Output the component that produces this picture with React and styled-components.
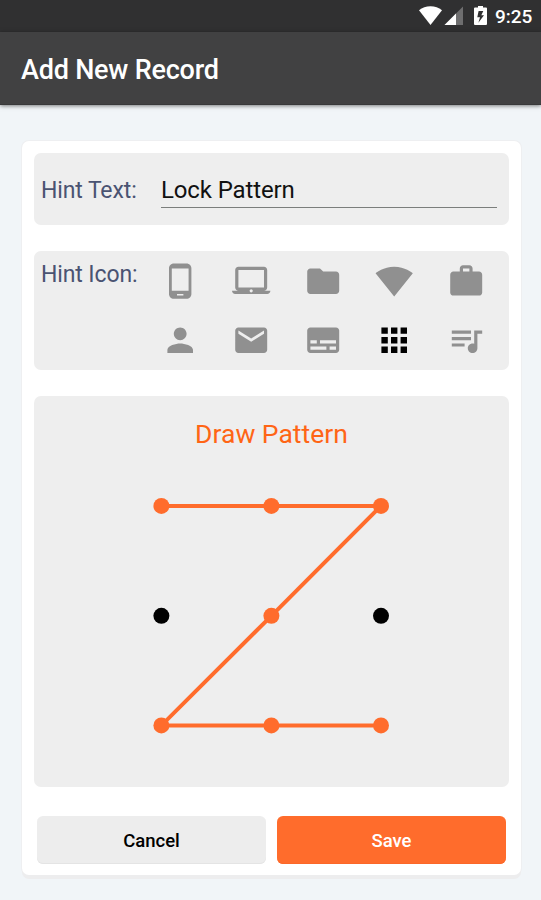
import React from "react";
import styled, { createGlobalStyle } from "styled-components";

const GlobalStyle = createGlobalStyle`
  *, *::before, *::after { box-sizing: border-box; }
  body {
    margin: 0;
    background: #f1f5f8;
    font-family: Roboto, sans-serif;
    overflow: hidden;
  }
`;

const Screen = styled.div`
  width: 541px;
  height: 900px;
  display: flex;
  flex-direction: column;
`;

const StatusBar = styled.div`
  height: 32px;
  flex: none;
  display: flex;
  align-items: center;
  justify-content: flex-end;
  padding-right: 8px;
  background: #303031;
  color: #fff;
`;

const StatusIcons = styled.svg`
  width: 80px;
  height: 32px;
`;

const Clock = styled.span`
  width: 38px;
  padding-top: 1px;
  font-size: 19px;
  font-weight: 500;
  line-height: 32px;
  white-space: nowrap;
`;

const AppBar = styled.header`
  height: 73px;
  flex: none;
  padding: 4px 21px 0;
  display: flex;
  align-items: center;
  background: #414142;
  border-bottom: 1px solid #39393a;
  box-shadow: 0 1px 4px rgba(0, 0, 0, 0.5);
`;

const Title = styled.h1`
  margin: 0;
  color: #fff;
  font-size: 27px;
  font-weight: 500;
  letter-spacing: -0.22px;
  white-space: nowrap;
`;

const Card = styled.main`
  width: 499px;
  height: 734px;
  margin: 36px 0 0 22px;
  padding: 12px;
  display: flex;
  flex-direction: column;
  background: #fff;
  border-radius: 7px;
  box-shadow: 0 4px 0 0 #ededee, 0 0 0 1px #eeeff1;
`;

const Panel = styled.section`
  width: 475px;
  height: ${(p) => p.$height}px;
  flex: none;
  margin-bottom: ${(p) => p.$gap}px;
  padding: ${(p) => p.$padding};
  display: flex;
  flex-direction: ${(p) => p.$direction || "row"};
  background: #eee;
  border-radius: 7px;
`;

const Label = styled.label`
  width: ${(p) => p.$width}px;
  flex: none;
  padding-top: ${(p) => p.$top}px;
  color: #4a5372;
  font-size: 23px;
  letter-spacing: -0.12px;
  line-height: 28px;
  white-space: nowrap;
`;

const TextInput = styled.input`
  width: 336px;
  height: 33px;
  padding: 0 0 3px;
  border: 0;
  border-bottom: 1px solid #7b7e7c;
  outline: 0;
  background: transparent;
  color: #111;
  font: 400 24px/28px Roboto, sans-serif;
  letter-spacing: -0.12px;
`;

const IconGrid = styled.div`
  width: 358px;
  flex: none;
  display: grid;
  grid-template-columns: repeat(5, 1fr);
  grid-template-rows: 59.5px 59.5px;
`;

const IconButton = styled.button`
  padding: 0;
  border: 0;
  background: none;
  display: flex;
  align-items: center;
  justify-content: center;
  color: ${(p) => (p.$selected ? "#000" : "#909090")};
`;

const Glyph = styled.svg`
  width: 38.4px;
  height: 38.4px;
  fill: currentColor;
`;

const PatternTitle = styled.h2`
  margin: 0;
  color: #ff6515;
  font-size: 26.5px;
  font-weight: 400;
  line-height: 32px;
  text-align: center;
`;

const PatternBoard = styled.svg`
  width: 475px;
  height: 335px;
`;

const Actions = styled.footer`
  display: flex;
  gap: 11px;
  padding: 0 3px;
`;

const Button = styled.button`
  width: 229px;
  height: 48px;
  padding: 2px 0 0;
  border: 0;
  border-radius: 6px;
  background: ${(p) => (p.$primary ? "#ff6c2c" : "#ededed")};
  color: ${(p) => (p.$primary ? "#fff" : "#000")};
  box-shadow: inset 0 -1px 0 ${(p) => (p.$primary ? "#fb6829" : "#e4e4e4")};
  font: 500 18.5px/24px Roboto, sans-serif;
`;

const ICONS = [
  { name: "Phone", d: "M16 1H8C6.34 1 5 2.34 5 4v16c0 1.66 1.34 3 3 3h8c1.66 0 3-1.34 3-3V4c0-1.66-1.34-3-3-3zm-2 20h-4v-1h4v1zm3.25-3H6.75V4h10.5v14z" },
  { name: "Laptop", d: "M20 18c1.1 0 1.99-.9 1.99-2L22 5c0-1.1-.9-2-2-2H4c-1.1 0-2 .9-2 2v11c0 1.1.9 2 2 2H0c0 1.1.9 2 2 2h20c1.1 0 2-.9 2-2h-4zM4 5h16v11H4V5zm8 14c-.55 0-1-.45-1-1s.45-1 1-1 1 .45 1 1-.45 1-1 1z" },
  { name: "Folder", d: "M10 4H4c-1.1 0-1.99.9-1.99 2L2 18c0 1.1.9 2 2 2h16c1.1 0 2-.9 2-2V8c0-1.1-.9-2-2-2h-8l-2-2z" },
  { name: "Wi-Fi", d: "M12.01 21.49L23.64 7c-.45-.34-4.93-4-11.64-4C5.28 3 .81 6.66.36 7l11.63 14.49.01.01.01-.01z" },
  { name: "Work", d: "M20 6h-4V4c0-1.11-.89-2-2-2h-4c-1.11 0-2 .89-2 2v2H4c-1.11 0-1.99.89-1.99 2L2 19c0 1.11.89 2 2 2h16c1.11 0 2-.89 2-2V8c0-1.11-.89-2-2-2zm-6 0h-4V4h4v2z" },
  { name: "Person", d: "M12 12c2.21 0 4-1.79 4-4s-1.79-4-4-4-4 1.79-4 4 1.79 4 4 4zm0 2c-2.67 0-8 1.34-8 4v2h16v-2c0-2.66-5.33-4-8-4z" },
  { name: "Mail", d: "M20 4H4c-1.1 0-1.99.9-1.99 2L2 18c0 1.1.9 2 2 2h16c1.1 0 2-.9 2-2V6c0-1.1-.9-2-2-2zm0 4l-8 5-8-5V6l8 5 8-5v2z" },
  { name: "Card", d: "M20 4H4c-1.1 0-2 .9-2 2v12c0 1.1.9 2 2 2h16c1.1 0 2-.9 2-2V6c0-1.1-.9-2-2-2zM4 12h4v2H4v-2zm10 6H4v-2h10v2zm6 0h-4v-2h4v2zm0-4H10v-2h10v2z" },
  { name: "Pattern", selected: true, d: "M4 8h4V4H4v4zm6 12h4v-4h-4v4zm-6 0h4v-4H4v4zm0-6h4v-4H4v4zm6 0h4v-4h-4v4zm6-10v4h4V4h-4zm-6 4h4V4h-4v4zm6 6h4v-4h-4v4zm0 6h4v-4h-4v4z" },
  { name: "Music", d: "M15 6H3v2h12V6zm0 4H3v2h12v-2zM3 16h8v-2H3v2zM17 6v8.18c-.31-.11-.65-.18-1-.18-1.66 0-3 1.34-3 3s1.34 3 3 3 3-1.34 3-3V8h3V6h-5z" },
];

const COLS = [127.4, 237.4, 347];
const ROWS = [55.9, 165.8, 275.4];
const PATH = [0, 1, 2, 4, 6, 7, 8];

const dots = ROWS.flatMap((y) => COLS.map((x) => ({ x, y })));

export default function App() {
  return (
    <>
      <GlobalStyle />
      <Screen>
        <StatusBar>
          <StatusIcons viewBox="0 0 80 32" fill="#fff">
            <path d="M15.5 25 4 10.2C7.2 7.6 11.2 6.2 15.5 6.2S23.8 7.6 27 10.2Z" />
            <path d="M48 6.5V25H29.5Z" opacity=".3" />
            <path d="M41 13.5V25H29.5Z" />
            <path fillRule="evenodd" d="M63 6H68V7.6H71Q72 7.6 72 8.6V24Q72 25 71 25H60Q59 25 59 24V8.6Q59 7.6 60 7.6H63ZM68.3 11H63.6L62.3 17.2H65L63.4 22.8L69 15.2H66.3Z" />
          </StatusIcons>
          <Clock>9:25</Clock>
        </StatusBar>
        <AppBar>
          <Title>Add New Record</Title>
        </AppBar>
        <Card>
          <Panel $height={72} $gap={26} $padding="22px 7px 0">
            <Label $width={120} $top={2} htmlFor="hint">Hint Text:</Label>
            <TextInput id="hint" defaultValue="Lock Pattern" />
          </Panel>
          <Panel $height={119} $gap={26} $padding="0 7px">
            <Label $width={103} $top={10} as="div">Hint Icon:</Label>
            <IconGrid>
              {ICONS.map(({ name, d, selected }) => (
                <IconButton key={name} aria-label={name} $selected={selected}>
                  <Glyph viewBox="0 0 24 24"><path d={d} /></Glyph>
                </IconButton>
              ))}
            </IconGrid>
          </Panel>
          <Panel $height={391} $gap={29} $padding="22px 0 0" $direction="column">
            <PatternTitle>Draw Pattern</PatternTitle>
            <PatternBoard viewBox="0 0 475 335">
              <polyline
                points={PATH.map((i) => `${dots[i].x},${dots[i].y}`).join(" ")}
                fill="none"
                stroke="#ff6c2c"
                strokeWidth="4"
              />
              {dots.map(({ x, y }, i) => (
                <circle key={i} cx={x} cy={y} r="8" fill={PATH.includes(i) ? "#ff6c2c" : "#000"} />
              ))}
            </PatternBoard>
          </Panel>
          <Actions>
            <Button>Cancel</Button>
            <Button $primary>Save</Button>
          </Actions>
        </Card>
      </Screen>
    </>
  );
}
